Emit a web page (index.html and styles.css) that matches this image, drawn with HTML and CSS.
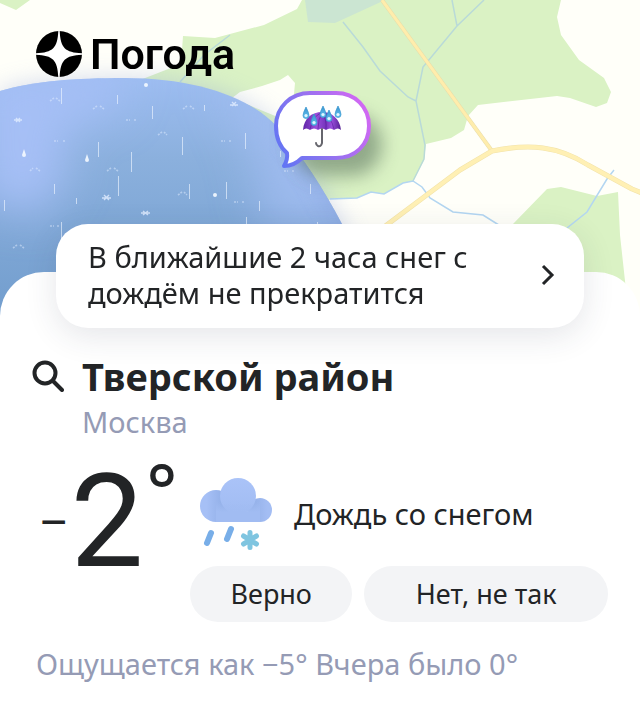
FILE: index.html
```html
<!DOCTYPE html>
<html lang="ru">
<head>
<meta charset="utf-8">
<meta name="viewport" content="width=device-width, initial-scale=1">
<title>Погода</title>
<link rel="stylesheet" href="styles.css">
</head>
<body>
<main class="weather">
  <header class="hero">
    <svg class="map" viewBox="0 0 640 320" preserveAspectRatio="xMidYMin slice" aria-hidden="true">
      <defs>
        <linearGradient id="cloud" x1="0" y1="78" x2="0" y2="310" gradientUnits="userSpaceOnUse">
          <stop offset="0" stop-color="#9dbdf1"/>
          <stop offset=".35" stop-color="#8bb0dd"/>
          <stop offset="1" stop-color="#739ece"/>
        </linearGradient>
        <filter id="soft" x="-50%" y="-50%" width="200%" height="200%"><feGaussianBlur stdDeviation="22"/></filter>
        <filter id="haze" x="-20%" y="-20%" width="140%" height="140%"><feGaussianBlur stdDeviation="12"/></filter>
        <clipPath id="cloudClip"><path d="M0 91C35 81 75 78 125 78C195 78 250 97 277 127C302 155 324 190 342 224L380 320H0Z"/></clipPath>
      </defs>
      <rect width="640" height="320" fill="#fffff9"/>
      <path fill="#daf2c4" d="M0 0H30L16 10L0 3ZM302 0H561L557 17L561 35L579 60L604 78L611 92L607 103L596 107L570 98L557 96L478 105L468 116L464 130L451 138L426 144L424 160L413 181L403 183L384 194L371 192L357 198L330 199L300 240L200 200L140 80L181 64L183 36L215 38L264 25L297 9Z"/>
      <path fill="#daf2c4" d="M513 224L547 189L561 187L597 196L618 192L620 235L626 290H480Z"/>
      <path fill="#fffff9" d="M232 98L240 92L262 86L280 80L288 75L295 83L294 94L285 120Z"/>
      <path fill="#cbe5d2" d="M305 0H385L335 23L308 22Z"/>
      <g fill="none" stroke="#b6d8e7" stroke-width="1.5">
        <path stroke="#b9dad8" d="M343 22L363 47L380 71L408 97L416 101M452 0L457 26L484 0M457 26L423 67L416 101L425 145L424 159L413 181M230 35L204 55L180 82"/>
        <path stroke="#b3d6f1" d="M330 199L357 198L371 192L384 194L403 183L413 181L422 187L430 198L453 212L483 215L502 227M614 170L607 179L587 212L567 228"/>
      </g>
      <g fill="none" stroke-linejoin="round">
        <path stroke="#e8dda9" stroke-width="4" d="M382 0L492 151"/>
        <path stroke="#ffedac" stroke-width="3" d="M382 0L492 151"/>
        <path stroke="#f2e3ab" stroke-width="5" d="M380 230L460 170L492 151Q522 145 543 148Q566 151 588 165L632 189L642 193"/>
        <path stroke="#fff0b4" stroke-width="4" d="M380 230L460 170L492 151Q522 145 543 148Q566 151 588 165L632 189L642 193"/>
      </g>
      <path d="M0 91C35 81 75 78 125 78C195 78 250 97 277 127C302 155 324 190 342 224L380 320H0Z" fill="#8d9fd8" opacity=".38" filter="url(#haze)"/>
      <g clip-path="url(#cloudClip)">
        <rect width="400" height="320" fill="url(#cloud)"/>
        <g filter="url(#soft)">
          <path fill="#a6bff6" d="M-20 70H130L115 110L60 125L70 170L40 215L-20 200Z"/>
          <path fill="#a3bdf2" opacity=".8" d="M215 75L250 150L265 230H380V120Z"/>
        </g>
        <path fill="none" stroke="#7891d8" stroke-width="14" opacity=".4" filter="url(#haze)" d="M285 120Q330 180 365 260"/>
      </g>
      <g stroke="#edf5ff" stroke-width="1" opacity=".65">
        <path d="M61.5 88V104M117.5 95V104M152.5 106V119M204.5 105V111M98.5 142V157M131.5 152V172M182.5 137V155M245.5 133V149M118.5 176V196M189.5 184V199M226.5 182V199M54.5 184V194M4.5 200V211M76.5 198V204M61.5 222V244M246.5 217V232M259.5 201V211M280.5 151V157M310.5 184V194M317.5 222V232"/>
      </g>
      <g fill="#f5faff" opacity=".9">
        <circle cx="146" cy="85" r="2"/><circle cx="215" cy="195" r="2"/>
        <path d="M24 149l-2 6a2 2 0 0 0 4 0zM87 154l-2 6a2 2 0 0 0 4 0z"/>
      </g>
      <g fill="none" stroke="#e2edff" stroke-width="1.4" opacity=".8">
        <path d="M14 120h8m-6-2l4 4m0-4l-4 4M102 198h9m-7-3l5 5m0-5l-5 5M141 213h9m-7-2l5 4m0-4l-5 4M230 105h8m-6-3l4 4m0-4l-4 4"/>
      </g>
      <g fill="none" stroke="#e2edff" stroke-width="1.6" stroke-dasharray="2 1" opacity=".5">
        <path d="M50 101l4-3m2 0l4 3M93 109l4-3m3 0l4 3M183 109l4-3m3 0l4 3M158 135l4-3m2 0l3 3M30 171l3-3m3 0l4 3M107 171l4-3m3 0l4 3M178 195l4-3m2 0l3 3M126 120h4m4 0h3M234 202h4m4 0h3M50 226h4m3 0h3M13 248l4-3m3 0l4 3M284 171h4m4 0h3M54 141h4m5 0h3M221 141h4m4 0h3"/>
      </g>
    </svg>
    <a class="brand" href="#" aria-label="Погода">
      <svg class="brand-mark" viewBox="0 0 46 46" aria-hidden="true">
        <circle cx="23" cy="23" r="23"/>
        <path fill="#fff" d="M22.3 0H23.7C24.5 17 29 21.5 46 22.3V23.7C29 24.5 24.5 29 23.7 46H22.3C21.5 29 17 24.5 0 23.7V22.3C17 21.5 21.5 17 22.3 0Z"/>
      </svg>
      <span class="brand-name">Погода</span>
    </a>
    <svg class="pin" viewBox="0 0 140 120" role="img" aria-label="Осадки">
      <defs>
        <linearGradient id="ring" x1="15" y1="90" x2="112" y2="40" gradientUnits="userSpaceOnUse">
          <stop offset="0" stop-color="#5875f5"/><stop offset=".45" stop-color="#8974ef"/><stop offset="1" stop-color="#d168f3"/>
        </linearGradient>
        <linearGradient id="umbrella"><stop offset="0" stop-color="#5f25a7"/><stop offset=".35" stop-color="#9a4edb"/><stop offset=".6" stop-color="#7634bd"/><stop offset=".75" stop-color="#9b50de"/><stop offset="1" stop-color="#542093"/></linearGradient>
        <linearGradient id="drop" x2="0" y2="1"><stop offset="0" stop-color="#3992ce"/><stop offset="1" stop-color="#66c5f1"/></linearGradient>
        <filter id="shade" x="-50%" y="-50%" width="200%" height="200%"><feGaussianBlur stdDeviation="9"/></filter>
      </defs>
      <rect x="34" y="34" width="88" height="62" rx="30" fill="#4f6855" opacity=".52" filter="url(#shade)"/>
      <path d="M50 13H76C95 13 109 27 109 46C109 65 95 78 76 78H42C37 83 31 86 24 86Q28 79 27 73C20 67 16 57 16 46C16 27 31 13 50 13Z" fill="#fff" stroke="url(#ring)" stroke-width="4" stroke-linejoin="round"/>
      <path fill="url(#umbrella)" d="M43 50C44 38 52 32 62 32C72 32 80 39 81 50Q78 47 74 50Q70 47 66 50Q62 47 58 50Q54 47 50 50Q46 47 43 50Z"/>
      <path fill="none" stroke="#4a168e" opacity=".5" d="M50 49Q53 36 61 33M58 49Q58 39 62 33M66 49Q67 39 62 33M74 49Q71 37 64 33"/>
      <path fill="none" stroke="#66666d" stroke-width="2" stroke-linecap="round" d="M62 49V63Q61 67 58 66Q56 65 56 63"/>
      <g fill="url(#drop)" stroke="#3996ce" stroke-width=".7">
        <path id="dropShape" d="M46 27Q49 33 49 35.5A3 3 0 0 1 43 35.5Q43 33 46 27Z"/>
        <use href="#dropShape" x="8" y="7"/><use href="#dropShape" x="17" y="-1"/><use href="#dropShape" x="23" y="3"/><use href="#dropShape" x="32" y="-1"/>
      </g>
      <g fill="#e1f7ff"><circle cx="46" cy="35.5" r="1.6"/><circle cx="54" cy="42.5" r="1.6"/><circle cx="63" cy="34.5" r="1.6"/><circle cx="69" cy="38.5" r="1.6"/><circle cx="78" cy="34.5" r="1.6"/></g>
    </svg>
  </header>

  <section class="sheet">
    <a class="alert" href="#">
      <span class="alert-text">В ближайшие 2 часа снег с дождём не прекратится</span>
      <svg class="chevron" viewBox="0 0 16 22" aria-hidden="true"><path d="M3 2L12 11L3 20"/></svg>
    </a>

    <div class="place">
      <button class="search" type="button" aria-label="Поиск">
        <svg viewBox="0 0 32 32" aria-hidden="true"><circle cx="13" cy="13" r="10.5"/><path d="M21 21L30 30"/></svg>
      </button>
      <div>
        <h1 class="place-name">Тверской район</h1>
        <p class="place-city">Москва</p>
      </div>
    </div>

    <div class="now">
      <p class="temp"><span class="temp-sign">−</span><span class="temp-value">2</span><span class="temp-degree">°</span></p>
      <div class="details">
        <div class="condition">
          <svg class="condition-icon" viewBox="0 0 72 72" aria-hidden="true">
            <defs>
              <linearGradient id="wc" x2="0" y2="1"><stop offset="0" stop-color="#aac3f8"/><stop offset="1" stop-color="#a1bcf2"/></linearGradient>
              <linearGradient id="wl" x1="0" x2="1"><stop offset=".2" stop-color="#a6c0f6"/><stop offset=".7" stop-color="#93b0e8"/></linearGradient>
              <linearGradient id="wr" x1="1" x2="0"><stop offset=".2" stop-color="#a3bdf3"/><stop offset=".8" stop-color="#93b0e8"/></linearGradient>
              <linearGradient id="wb" x2="0" y2="1"><stop offset="0" stop-color="#a1bcf2" stop-opacity="0"/><stop offset=".5" stop-color="#a1bcf2"/></linearGradient>
            </defs>
            <circle cx="60" cy="32" r="12" fill="url(#wr)"/>
            <circle cx="16" cy="28" r="16" fill="url(#wl)"/>
            <circle cx="38" cy="18" r="18" fill="url(#wc)"/>
            <path fill="url(#wb)" d="M16 24H60V44H16Z"/>
            <path fill="none" stroke="#78aee8" stroke-width="6" stroke-linecap="round" d="M11 55L7 65M31 51L27 61"/>
            <path fill="none" stroke="#7fc5e0" stroke-width="5" stroke-linecap="round" d="M50 54.500V69.500M43.500 58L56.500 66M43.500 66L56.500 58"/>
          </svg>
          <span>Дождь со снегом</span>
        </div>
        <div class="answers">
          <button type="button">Верно</button>
          <button type="button">Нет, не так</button>
        </div>
      </div>
    </div>

    <p class="extra">Ощущается как −5° Вчера было 0°</p>
  </section>
</main>
</body>
</html>
```
FILE: styles.css
```css
* {
  box-sizing: border-box;
}

body {
  margin: 0;
  background: #fff;
  color: #222426;
  font-family: "Noto Sans", "Open Sans", sans-serif;
  font-size: 29px;
  line-height: 36px;
}

h1,
p {
  margin: 0;
}

a {
  color: inherit;
  text-decoration: none;
}

button {
  border: 0;
  color: inherit;
  font: inherit;
  cursor: pointer;
}

.weather {
  position: relative;
}

.hero {
  height: 272px;
  padding: 26px 36px;
}

.map {
  position: absolute;
  top: 0;
  left: 0;
  width: 100%;
  height: 320px;
}

.brand {
  position: relative;
  display: inline-flex;
  align-items: center;
  gap: 8px;
  color: #000;
}

.brand-mark {
  width: 46px;
  height: 46px;
}

.brand-name {
  font-family: Roboto, sans-serif;
  font-size: 43px;
  font-weight: 600;
  line-height: 56px;
}

.pin {
  position: absolute;
  top: 80px;
  left: 260px;
  width: 140px;
  height: 120px;
}

.sheet {
  position: relative;
  padding: 0 32px 16px;
  border-radius: 44px 44px 0 0;
  background: #fff;
}

.alert {
  position: relative;
  top: -48px;
  display: flex;
  align-items: center;
  justify-content: space-between;
  gap: 24px;
  margin: 0 24px -48px;
  padding: 15px 28px 17px 32px;
  border-radius: 32px;
  background: #fff;
  box-shadow: 0 8px 32px rgba(40, 50, 70, 0.12);
}

.alert-text {
  max-width: 400px;
}

.chevron {
  flex: none;
  width: 16px;
  height: 22px;
  fill: none;
  stroke: #222426;
  stroke-width: 3;
}

.place {
  display: flex;
  gap: 18px;
  padding-top: 26px;
}

.search {
  width: 32px;
  height: 32px;
  margin-top: 6px;
  padding: 0;
  background: none;
}

.search svg {
  display: block;
  fill: none;
  stroke: #222426;
  stroke-width: 4;
  stroke-linecap: round;
}

.place-name {
  font-size: 38px;
  line-height: 44px;
}

.place-city {
  margin-top: 4px;
  line-height: 40px;
  color: #959bb5;
}

.now {
  display: flex;
  padding-top: 36px;
}

.temp {
  display: flex;
  flex: none;
  gap: 3px;
  width: 158px;
  padding-left: 8px;
}

.temp-sign {
  font-size: 48px;
  line-height: 86px;
}

.temp-value {
  font-family: Roboto, sans-serif;
  font-size: 130px;
  line-height: 88px;
}

.temp-degree {
  font-size: 72px;
  font-weight: 500;
  line-height: 22px;
}

.details {
  flex: 1;
  min-width: 0;
}

.condition {
  display: flex;
  align-items: center;
  gap: 22px;
  padding-left: 10px;
}

.condition-icon {
  flex: none;
  width: 72px;
  height: 72px;
}

.answers {
  display: grid;
  grid-template-columns: 2fr 3fr;
  gap: 12px;
  padding-top: 16px;
}

.answers button {
  height: 56px;
  padding: 0 12px;
  border-radius: 28px;
  background: #f3f4f6;
  font-size: 27px;
}

.extra {
  padding: 22px 4px 0;
  line-height: 40px;
  color: #959bb5;
}
```
